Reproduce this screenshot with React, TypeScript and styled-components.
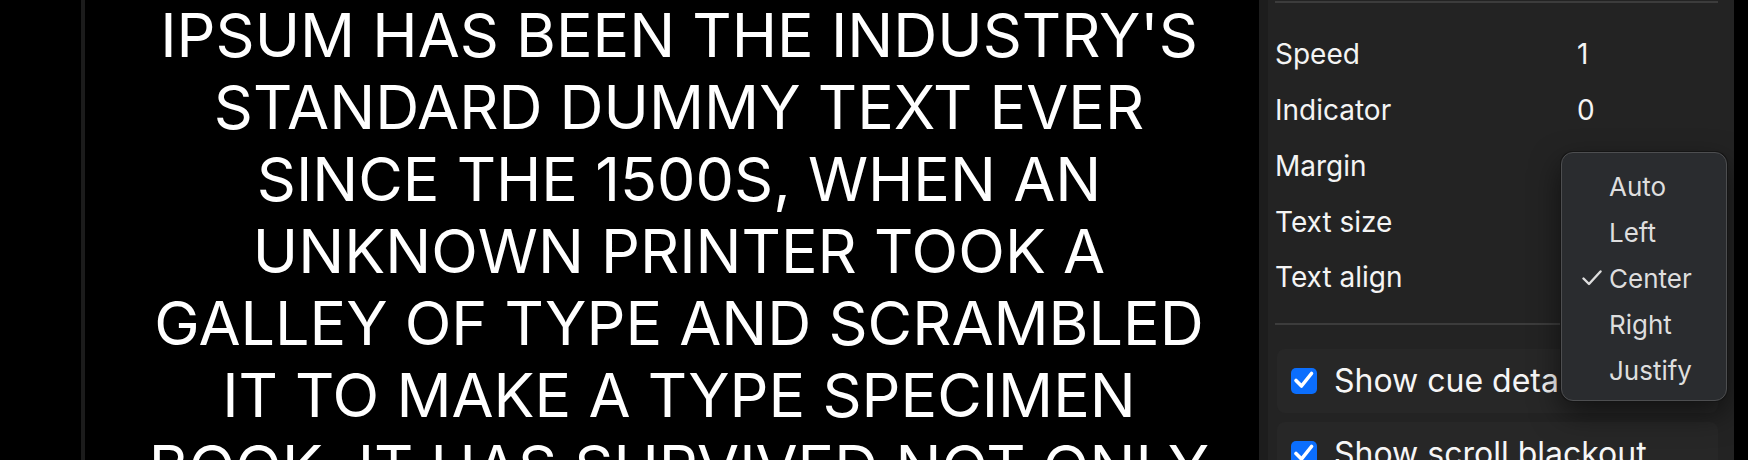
import React from "react";
import styled, { createGlobalStyle } from "styled-components";

const GlobalStyle = createGlobalStyle`
  html, body {
    margin: 0;
    padding: 0;
    background: #000;
    overflow: hidden;
  }
  body {
    font-family: Inter, "Noto Sans", "DejaVu Sans", sans-serif;
    color: #fff;
  }
`;

const Layout = styled.div`
  display: flex;
  width: 1748px;
  height: 460px;
  padding-right: 14px;
  box-sizing: border-box;
  background: #000;
  overflow: hidden;
`;

const Gutter = styled.div`
  flex: none;
  width: 81px;
  border-right: 4px solid #1c1c1c;
`;

const Stage = styled.main`
  flex: 1;
  min-width: 0;
  display: flex;
  justify-content: center;
  padding-left: 14px;
  overflow: hidden;
  background: #000;
`;

const Prompt = styled.p`
  margin: -1px 0 0;
  font-size: 61px;
  line-height: 72px;
  font-weight: 400;
  color: #fff;
  text-transform: uppercase;
  text-align: center;
  white-space: pre;
`;

const Panel = styled.aside`
  position: relative;
  flex: none;
  width: 475px;
  box-sizing: border-box;
  display: flex;
  flex-direction: column;
  padding: 1px 16px 0 7px;
  background: #232323;
  border-left: 9px solid #1d1d1d;
`;

const Rule = styled.div<{ $top: number }>`
  flex: none;
  margin-top: ${(p) => p.$top}px;
  height: 2px;
  background: #3c3c3c;
`;

const Settings = styled.dl`
  margin: 23.5px 0 0;
  display: grid;
  grid-template-columns: 302px 1fr;
  grid-auto-rows: 55.75px;
  align-items: center;
  font-size: 28px;
  line-height: 34px;
`;

const Label = styled.dt`
  margin: 0;
  color: #f4f4f4;
`;

const Value = styled.dd`
  margin: 0;
  color: #f4f4f4;
`;

const Toggles = styled.div`
  margin-top: 24px;
  margin-left: 2px;
  display: flex;
  flex-direction: column;
  gap: 9px;
`;

const ToggleRow = styled.label`
  display: flex;
  align-items: center;
  gap: 17px;
  height: 64px;
  flex: none;
  padding-left: 14px;
  border-radius: 8px;
  background: #272727;
  font-size: 32px;
  color: #f6f6f6;
  white-space: nowrap;
  overflow: hidden;
`;

const Box = styled.span`
  flex: none;
  width: 26px;
  height: 26px;
  border-radius: 5px;
  background: #0b6efd;
  display: flex;
  align-items: center;
  justify-content: center;
`;

const Menu = styled.ul`
  position: absolute;
  left: 293px;
  top: 152px;
  width: 166px;
  height: 249px;
  box-sizing: border-box;
  margin: 0;
  padding: 10px 0 8px;
  list-style: none;
  background: #2a2c2f;
  border: 1px solid #4d4e50;
  border-radius: 12px;
  box-shadow: 0 0 0 1px #151515, 0 12px 30px rgba(0, 0, 0, 0.55);
`;

const MenuItem = styled.li`
  display: flex;
  align-items: center;
  height: 46.2px;
  padding-left: 20px;
  font-size: 26px;
  color: #dedede;
`;

const CheckSlot = styled.span`
  flex: none;
  width: 27px;
  display: flex;
  align-items: center;
`;

const settings = [
  { label: "Speed", value: "1" },
  { label: "Indicator", value: "0" },
  { label: "Margin", value: "" },
  { label: "Text size", value: "" },
  { label: "Text align", value: "" },
];

const alignOptions = ["Auto", "Left", "Center", "Right", "Justify"];

const text =
  "Ipsum has been the industry's\nstandard dummy text ever\nsince the 1500s, when an\nunknown printer took a\ngalley of type and scrambled\nit to make a type specimen\nbook. It has survived not only";

function Tick() {
  return (
    <svg width="20" height="16" viewBox="0 0 20 16" fill="none">
      <path
        d="M1.5 8.5 L7 14 L18.5 1.5"
        stroke="#dedede"
        strokeWidth="2.4"
        strokeLinecap="round"
        strokeLinejoin="round"
      />
    </svg>
  );
}

function BoxCheck() {
  return (
    <svg width="26" height="26" viewBox="0 0 26 26" fill="none">
      <path
        d="M5 12.5 L10.5 18 L20.5 5.5"
        stroke="#fff"
        strokeWidth="3.6"
        strokeLinecap="round"
        strokeLinejoin="round"
      />
    </svg>
  );
}

export default function App() {
  return (
    <>
      <GlobalStyle />
      <Layout>
        <Gutter />
        <Stage>
          <Prompt>{text}</Prompt>
        </Stage>
        <Panel>
          <Rule $top={0} />
          <Settings>
            {settings.map((s) => (
              <React.Fragment key={s.label}>
                <Label>{s.label}</Label>
                <Value>{s.value}</Value>
              </React.Fragment>
            ))}
          </Settings>
          <Rule $top={17.5} />
          <Toggles>
            <ToggleRow>
              <Box>
                <BoxCheck />
              </Box>
              Show cue details
            </ToggleRow>
            <ToggleRow>
              <Box>
                <BoxCheck />
              </Box>
              Show scroll blackout
            </ToggleRow>
          </Toggles>
          <Menu>
            {alignOptions.map((o) => (
              <MenuItem key={o}>
                <CheckSlot>{o === "Center" ? <Tick /> : null}</CheckSlot>
                {o}
              </MenuItem>
            ))}
          </Menu>
        </Panel>
      </Layout>
    </>
  );
}
